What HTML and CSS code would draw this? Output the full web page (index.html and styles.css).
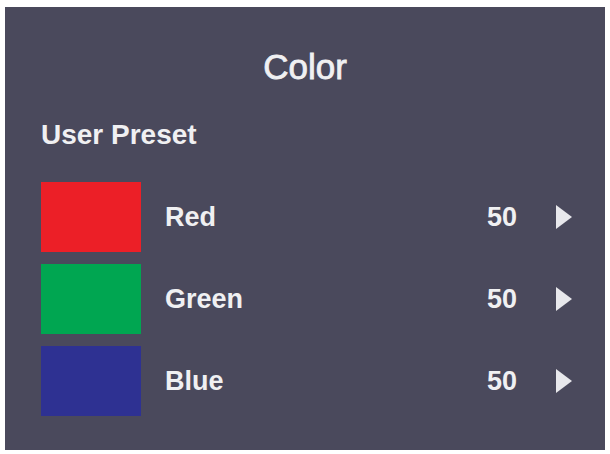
FILE: index.html
```html
<!DOCTYPE html>
<html lang="en">

<head>
    <meta charset="UTF-8">
    <meta name="viewport" content="width=device-width, initial-scale=1.0">
    <title>Color</title>
    <link rel="stylesheet" href="styles.css">
</head>

<body>
    <div class="osd">
        <h1 class="osd-title">Color</h1>
        <h2 class="section-title">User Preset</h2>

        <div class="channels">
            <div class="channel">
                <div class="swatch swatch-red"></div>
                <span class="channel-name">Red</span>
                <span class="channel-value">50</span>
                <span class="arrow"></span>
            </div>
            <div class="channel">
                <div class="swatch swatch-green"></div>
                <span class="channel-name">Green</span>
                <span class="channel-value">50</span>
                <span class="arrow"></span>
            </div>
            <div class="channel">
                <div class="swatch swatch-blue"></div>
                <span class="channel-name">Blue</span>
                <span class="channel-value">50</span>
                <span class="arrow"></span>
            </div>
        </div>
    </div>
</body>

</html>
```

FILE: styles.css
```css
:root {
    --panel-bg: #4a495c;
    --text-color: #f0f0f2;
}

* {
    margin: 0;
    padding: 0;
    box-sizing: border-box;
}

body {
    background-color: #fff;
    font-family: "Liberation Sans", Arial, sans-serif;
    color: var(--text-color);
}

.osd {
    width: 600px;
    height: 443px;
    margin: 7px 0 0 5px;
    padding: 40px 33px 0 36px;
    background-color: var(--panel-bg);
}

.osd-title {
    font-size: 35px;
    font-weight: normal;
    line-height: 40px;
    text-align: center;
    padding-right: 3px;
    -webkit-text-stroke: 0.8px var(--text-color);
}

.section-title {
    margin-top: 32px;
    font-size: 28px;
    font-weight: bold;
    line-height: 32px;
}

.channels {
    display: flex;
    flex-direction: column;
    gap: 12px;
    margin-top: 31px;
}

.channel {
    display: flex;
    align-items: center;
}

.swatch {
    width: 100px;
    height: 70px;
}

.swatch-red {
    background-color: #ec1f27;
}

.swatch-green {
    background-color: #00a651;
}

.swatch-blue {
    background-color: #2e3192;
}

.channel-name,
.channel-value {
    font-size: 27px;
    font-weight: bold;
    line-height: 30px;
}

.channel-name {
    flex: 1;
    margin-left: 24px;
}

.arrow {
    width: 0;
    height: 0;
    margin-left: 39px;
    border-left: 16px solid #e8e8ec;
    border-top: 12px solid transparent;
    border-bottom: 12px solid transparent;
}
```
